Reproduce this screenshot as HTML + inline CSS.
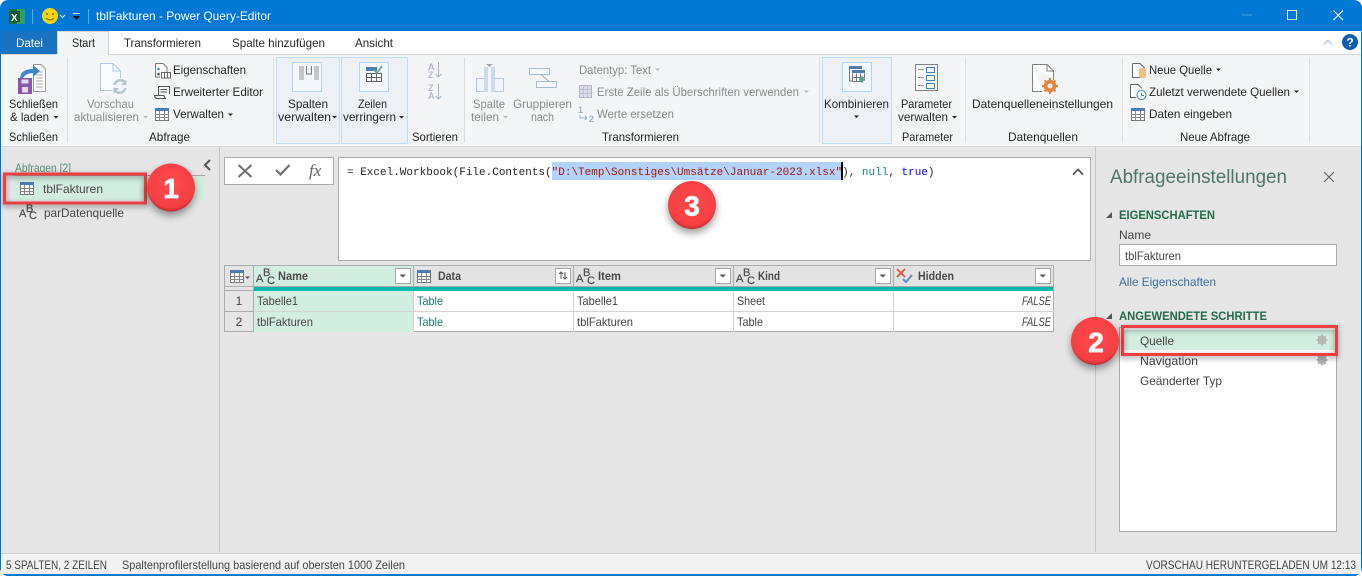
<!DOCTYPE html>
<html lang="de"><head><meta charset="utf-8"><title>tblFakturen - Power Query-Editor</title>
<style>
html,body{margin:0;padding:0;background:#fff;width:1362px;height:576px;overflow:hidden}
svg{display:block}
text{font-family:"Liberation Sans",sans-serif;font-size:12px;fill:#262626}
.d{fill:#8b8b8b}
.t{fill:#fff}
.s{fill:#444}
.m{font-family:"Liberation Mono",monospace;font-size:11px}
.h{font-weight:bold;fill:#4a4a4a;font-size:11.5px}
.g{font-weight:bold;fill:#1f6b4a;font-size:12px}
.n{fill:#fff;stroke:#fff;stroke-width:.7px;font-weight:bold;font-size:28px;text-anchor:middle}
.abc{font-size:11px;fill:#4a4a4a;stroke:#4a4a4a;stroke-width:.2px}
.b{filter:drop-shadow(0 2px 3px rgba(0,0,0,.45))}
.c{filter:drop-shadow(0 4px 4px rgba(0,0,0,.4))}
</style></head><body>
<svg width="1362" height="576" viewBox="0 0 1362 576" xmlns="http://www.w3.org/2000/svg">
<defs>
<radialGradient id="rg" cx="50%" cy="42%" r="58%"><stop offset="0" stop-color="#ff4a4c"/><stop offset=".86" stop-color="#f73f43"/><stop offset="1" stop-color="#c22a30"/></radialGradient>
<g id="tb"><rect x=".5" y=".5" width="13" height="12" fill="#fff" stroke="#777"/><rect x="0" y="0" width="14" height="3" fill="#4f7cb0"/><path d="M0 6.5H14M0 9.5H14M4.500 3V13M9.500 3V13" stroke="#888" stroke-width="1" fill="none"/></g>
<g id="dd"><rect x=".5" y=".5" width="15" height="15" fill="#fff" stroke="#a6a6a6"/><path d="M4.500 6.500H11L7.750 9.500Z" fill="#555"/></g>
<g id="gear"><circle cx="0" cy="0" r="3.200" fill="none" stroke="#b5b5b5" stroke-width="2.400"/><path d="M0-5.500V5.500M-5.500 0H5.500M-3.900-3.900L3.900 3.900M-3.900 3.900L3.900-3.900" stroke="#b5b5b5" stroke-width="1.800"/></g>
</defs>

<!-- window -->
<rect x="0" y="0" width="1362" height="576" rx="8" fill="#0078d4"/>
<rect x="1" y="31" width="1360" height="543" fill="#e6e6e6"/>

<!-- title bar -->
<rect x="9" y="9" width="16" height="15" rx="1" fill="#1d6f42"/><rect x="17" y="9" width="8" height="15" fill="#2e9e62"/><rect x="9" y="11" width="11" height="11" fill="#0f5c33"/><text x="11" y="21" class="t" style="font-size:10px;font-weight:bold">X</text>
<path d="M32.500 9V24M88.500 9V24" stroke="#5aa7e3"/>
<circle cx="50" cy="16" r="8" fill="#f5d312"/><circle cx="47" cy="14" r="1" fill="#8a6d00"/><circle cx="53" cy="14" r="1" fill="#8a6d00"/><path d="M46 18q4 4 8 0" stroke="#8a6d00" fill="none"/>
<path d="M60 15l2.500 2.500L65 15" stroke="#cfe5f7" fill="none"/>
<path d="M73 13.500H80" stroke="#fff"/><path d="M73 16H80L76.500 20Z" fill="#111"/>
<text x="96" y="20" class="t" textLength="175" lengthAdjust="spacingAndGlyphs">tblFakturen - Power Query-Editor</text>
<path d="M1242 15H1252" stroke="#4a9de0"/>
<rect x="1287.500" y="10.500" width="9" height="9" fill="none" stroke="#fff"/>
<path d="M1333.500 10.500L1343 20M1343 10.500L1333.500 20" stroke="#fff" fill="none"/>

<!-- tabs -->
<rect x="1" y="31" width="1360" height="23" fill="#fff"/>
<rect x="1" y="31" width="56" height="23" fill="#1a72c2"/>
<path d="M57.500 54V31.500H108.500V54" fill="#f4f5f7" stroke="#d2d2d2"/>
<text x="16" y="47" class="t" textLength="27" lengthAdjust="spacingAndGlyphs">Datei</text>
<text x="72" y="47" textLength="23" lengthAdjust="spacingAndGlyphs">Start</text>
<text x="124" y="47" textLength="77" lengthAdjust="spacingAndGlyphs">Transformieren</text>
<text x="232" y="47" textLength="93" lengthAdjust="spacingAndGlyphs">Spalte hinzufügen</text>
<text x="355" y="47" textLength="38" lengthAdjust="spacingAndGlyphs">Ansicht</text>
<path d="M1324 44.500l4-4 4 4" stroke="#bdbdbd" fill="none" stroke-width="1.200"/>
<circle cx="1350" cy="42" r="8" fill="#0e5fb4"/><text x="1350" y="46.500" class="t" style="font-size:12px;font-weight:bold;text-anchor:middle">?</text>

<!-- ribbon -->
<rect x="1" y="54" width="1360" height="93" fill="#f4f5f7"/>
<path d="M108 54.500H1361" stroke="#d6d6d6"/><path d="M1 54.500H57" stroke="#d6d6d6"/>
<path d="M1 146.500H1361" stroke="#d9d9d9"/>
<path d="M67.500 57V143M273.500 57V143M464.500 57V143M819.500 57V143M965.500 57V143M1122.500 57V143M1309.500 57V143" stroke="#dcdcdc"/>
<rect x="276.500" y="57.500" width="63" height="86" fill="#edf1f6" stroke="#c3dcf5"/>
<rect x="341.500" y="57.500" width="66" height="86" fill="#edf1f6" stroke="#c3dcf5"/>
<rect x="822.500" y="57.500" width="69" height="86" fill="#edf1f6" stroke="#c3dcf5"/>

<!-- Schließen & laden icon -->
<path d="M33.500 64.500H41L45.500 69V91.500H33.500Z" fill="#fff" stroke="#999"/><path d="M36 72H43M36 75H43M36 78H43M36 81H43M36 84H43M36 87H43" stroke="#aaa"/>
<path d="M20 78q1-9 13-9v-4l7 6-7 6v-4q-7 0-10 5Z" fill="#3f87c9"/>
<rect x="18" y="78" width="14" height="16" fill="#8c56a8"/><rect x="21.500" y="79.500" width="7" height="4" fill="#e6d8ee"/><rect x="22" y="87" width="6" height="5.500" fill="#e6d8ee"/>
<text x="9" y="108" textLength="49" lengthAdjust="spacingAndGlyphs">Schließen</text>
<text x="10" y="121" textLength="39" lengthAdjust="spacingAndGlyphs">&amp; laden</text>
<path d="M53.500 116H58.500L56 118.500Z" fill="#222"/>
<text x="9" y="141" textLength="49" lengthAdjust="spacingAndGlyphs">Schließen</text>

<!-- Abfrage -->
<path d="M100.500 63.500H113L120.500 71V90.500H100.500Z" fill="#f8fafd" stroke="#b5c8e2"/><path d="M113 63.500V71H120.500" fill="none" stroke="#b5c8e2"/>
<circle cx="120" cy="86.500" r="8.500" fill="#f4f5f7"/>
<path d="M114.500 85a6 6 0 0 1 10.500-2.500M125.500 88a6 6 0 0 1-10.500 2.500" fill="none" stroke="#b7c4d0" stroke-width="2.400"/>
<path d="M126.500 79.500V85H121ZM113.500 93.500V88H119Z" fill="#b7c4d0"/>
<text x="87" y="108" class="d" textLength="47" lengthAdjust="spacingAndGlyphs">Vorschau</text>
<text x="74" y="121" class="d" textLength="65" lengthAdjust="spacingAndGlyphs">aktualisieren</text>
<path d="M143 116H148L145.500 118.500Z" fill="#bbb"/>
<path d="M155.500 63.500H163L167 67.500V77" fill="#fff" stroke="#777"/><path d="M155.500 63.500V77H160" fill="none" stroke="#777"/><circle cx="158.500" cy="69" r="1.300" fill="#5b8ec2"/><circle cx="158.500" cy="74" r="1.300" fill="#555"/>
<rect x="161.500" y="72.500" width="9" height="5.500" fill="#fff" stroke="#666"/><path d="M164.500 72.500V78M167.500 72.500V78" stroke="#666"/>
<path d="M158.500 86.500H169.500V94M158.500 86.500V95.500H154.500Q155 98.500 157 98.500H166Q164 98 164 95.500H158.500M160.500 89.500H167M160.500 92H167" fill="none" stroke="#555"/>
<use href="#tb" x="155" y="108"/>
<text x="173" y="74" textLength="73" lengthAdjust="spacingAndGlyphs">Eigenschaften</text>
<text x="173" y="96" textLength="90" lengthAdjust="spacingAndGlyphs">Erweiterter Editor</text>
<text x="173" y="118" textLength="51" lengthAdjust="spacingAndGlyphs">Verwalten</text>
<path d="M228 113.500H233L230.500 116Z" fill="#222"/>
<text x="149" y="141" textLength="41" lengthAdjust="spacingAndGlyphs">Abfrage</text>

<!-- Spalten -->
<rect x="292.500" y="62.500" width="29" height="29" fill="#f3f6fa" stroke="#b5d5f3"/>
<rect x="299" y="66" width="5" height="14" fill="#c4c6cb"/><rect x="314" y="66" width="5" height="14" fill="#c4c6cb"/>
<path d="M306.500 66V74H311.500V66" fill="none" stroke="#777"/>
<text x="288" y="108" textLength="40" lengthAdjust="spacingAndGlyphs">Spalten</text>
<text x="278" y="121" textLength="53" lengthAdjust="spacingAndGlyphs">verwalten</text>
<path d="M332 116H337L334.500 118.500Z" fill="#222"/>

<!-- Zeilen -->
<rect x="359.500" y="62.500" width="29" height="29" fill="#f3f6fa" stroke="#b5d5f3"/>
<rect x="366" y="67" width="11" height="4" fill="#4f7cb0"/>
<rect x="366.500" y="73.500" width="15" height="8" fill="#fff" stroke="#666"/><path d="M371.500 73.500V81.500M376.500 73.500V81.500M366.500 77.500H381.500" stroke="#666"/>
<path d="M374 70l3 3 5-7" stroke="#67ab94" stroke-width="1.700" fill="none"/>
<text x="358" y="108" textLength="29" lengthAdjust="spacingAndGlyphs">Zeilen</text>
<text x="343" y="121" textLength="53" lengthAdjust="spacingAndGlyphs">verringern</text>
<path d="M399 116H404L401.500 118.500Z" fill="#222"/>

<!-- Sortieren -->
<text x="428" y="70" style="font-size:9px;font-weight:bold;fill:#b3bcc9">A</text><text x="428" y="78" style="font-size:9px;font-weight:bold;fill:#b3bcc9">Z</text>
<text x="428" y="91" style="font-size:9px;font-weight:bold;fill:#b3bcc9">Z</text><text x="428" y="99" style="font-size:9px;font-weight:bold;fill:#b3bcc9">A</text>
<path d="M438.500 62V77M435.500 74l3 3 3-3M438.500 84V99M435.500 96l3 3 3-3" stroke="#a5b3c5" fill="none"/>
<text x="412" y="141" textLength="46" lengthAdjust="spacingAndGlyphs">Sortieren</text>

<!-- Transformieren -->
<rect x="476.500" y="78.500" width="9" height="13" fill="#f1f4f9" stroke="#b6c5dc"/><rect x="493.500" y="78.500" width="10" height="13" fill="#f1f4f9" stroke="#b6c5dc"/>
<rect x="484" y="67" width="4" height="25" fill="#cddaeb"/><rect x="491" y="67" width="4" height="25" fill="#cddaeb"/><path d="M486 64H493L489.500 67Z" fill="#a8a8a8"/>
<rect x="529.500" y="68.500" width="20" height="6" fill="#f6f8fb" stroke="#a8bcd8"/><rect x="536.500" y="81.500" width="20" height="6" fill="#f6f8fb" stroke="#a8bcd8"/><path d="M541 74.500L549 81.500" stroke="#a8a8a8"/>
<text x="473" y="108" class="d" textLength="32" lengthAdjust="spacingAndGlyphs">Spalte</text>
<text x="471" y="121" class="d" textLength="28" lengthAdjust="spacingAndGlyphs">teilen</text>
<path d="M503 116H508L505.500 118.500Z" fill="#bbb"/>
<text x="513" y="108" class="d" textLength="59" lengthAdjust="spacingAndGlyphs">Gruppieren</text>
<text x="531" y="121" class="d" textLength="23" lengthAdjust="spacingAndGlyphs">nach</text>
<text x="579" y="74" class="d" textLength="72" lengthAdjust="spacingAndGlyphs">Datentyp: Text</text>
<path d="M655 68.500H660L657.500 71Z" fill="#bbb"/>
<rect x="579.500" y="85.500" width="12" height="12" fill="#dcdde8" stroke="#b5b5c5"/><path d="M583.500 86V97M587.500 86V97M580 89.500H591M580 93.500H591" stroke="#c0c0d0"/>
<text x="597" y="96" class="d" textLength="202" lengthAdjust="spacingAndGlyphs">Erste Zeile als Überschriften verwenden</text>
<path d="M804 90.500H809L806.500 93Z" fill="#bbb"/>
<text x="578" y="113" style="font-size:9px;font-weight:bold;fill:#9db0c8">1</text><text x="589" y="122" style="font-size:9px;font-weight:bold;fill:#9db0c8">2</text>
<path d="M580 115v3h7M585 116l2 2-2 2" stroke="#9db0c8" fill="none"/>
<text x="597" y="118" class="d" textLength="77" lengthAdjust="spacingAndGlyphs">Werte ersetzen</text>
<text x="602" y="141" textLength="77" lengthAdjust="spacingAndGlyphs">Transformieren</text>

<!-- Kombinieren -->
<rect x="842.500" y="62.500" width="29" height="29" fill="#f3f6fa" stroke="#b5d5f3"/>
<rect x="849" y="66" width="13" height="3" fill="#4f7cb0"/><rect x="852" y="70" width="13" height="3" fill="#4f7cb0"/>
<path d="M849.500 69V81H853M852.500 73.500V81.500H861M852.500 77.500H865M856.500 73.500V81.500M860.500 73.500V80M864.500 73.500V78" fill="none" stroke="#777"/>
<path d="M862 76.500V82.500M859 79.500H865" stroke="#5a9c86" stroke-width="2.200"/>
<text x="824" y="108" textLength="65" lengthAdjust="spacingAndGlyphs">Kombinieren</text>
<path d="M854 115.500H859L856.500 118Z" fill="#222"/>

<!-- Parameter -->
<rect x="915.500" y="64.500" width="22" height="26" fill="#f7f8fa" stroke="#808080"/>
<path d="M918 69.500H924M918 77.500H924M918 85.500H924" stroke="#999"/>
<rect x="926.500" y="67.500" width="8" height="5" fill="#fff" stroke="#3f7fbd"/><rect x="926.500" y="75.500" width="8" height="5" fill="#fff" stroke="#3f7fbd"/><rect x="926.500" y="83.500" width="8" height="5" fill="#fff" stroke="#3f7fbd"/>
<text x="901" y="108" textLength="51" lengthAdjust="spacingAndGlyphs">Parameter</text>
<text x="898" y="121" textLength="50" lengthAdjust="spacingAndGlyphs">verwalten</text>
<path d="M952 116H957L954.500 118.500Z" fill="#222"/>
<text x="902" y="141" textLength="51" lengthAdjust="spacingAndGlyphs">Parameter</text>

<!-- Datenquellen -->
<path d="M1032.500 64.500H1047L1053.500 71V80M1032.500 64.500V91.500H1042" fill="#fff" stroke="#808080"/><path d="M1047 64.500V71H1053.500" fill="none" stroke="#808080"/>
<circle cx="1050" cy="86" r="4.500" fill="none" stroke="#e8873a" stroke-width="3.500"/><path d="M1050 78V94M1042 86H1058M1044.500 80.500L1055.500 91.500M1044.500 91.500L1055.500 80.500" stroke="#e8873a" stroke-width="2.200"/><circle cx="1050" cy="86" r="2.500" fill="#f4f5f7"/>
<text x="972" y="108" textLength="141" lengthAdjust="spacingAndGlyphs">Datenquelleneinstellungen</text>
<text x="1008" y="141" textLength="70" lengthAdjust="spacingAndGlyphs">Datenquellen</text>

<!-- Neue Abfrage -->
<path d="M1132.500 63.500H1140L1144.500 68M1132.500 63.500V77.500H1140" fill="#fff" stroke="#666"/>
<rect x="1139" y="68" width="7" height="10" rx="2" fill="#eec284"/>
<text x="1149" y="74" textLength="63" lengthAdjust="spacingAndGlyphs">Neue Quelle</text>
<path d="M1216 68.500H1221L1218.500 71Z" fill="#222"/>
<path d="M1130.500 84.500H1138L1142 88.500M1130.500 84.500V97.500H1136" fill="#fff" stroke="#666"/>
<circle cx="1141.500" cy="95" r="4.500" fill="#fff" stroke="#4a84bd"/><path d="M1141.500 92.500V95.500H1144" stroke="#4a84bd" fill="none"/>
<text x="1149" y="96" textLength="141" lengthAdjust="spacingAndGlyphs">Zuletzt verwendete Quellen</text>
<path d="M1294 90.500H1299L1296.500 93Z" fill="#222"/>
<use href="#tb" x="1131" y="108"/>
<text x="1149" y="118" textLength="83" lengthAdjust="spacingAndGlyphs">Daten eingeben</text>
<text x="1180" y="141" textLength="70" lengthAdjust="spacingAndGlyphs">Neue Abfrage</text>

<!-- pane separators -->
<path d="M219.500 147V552M1095.500 147V552" stroke="#c6c6c6"/>

<!-- left queries pane -->
<text x="15" y="172" style="fill:#5a8d76" textLength="56" lengthAdjust="spacingAndGlyphs">Abfragen [2]</text>
<path d="M14 175.500H205" stroke="#a8a8a8"/>
<rect x="14" y="176" width="191" height="24" fill="#d2eee0"/>
<use href="#tb" x="20" y="182"/>
<text x="43" y="193" class="s" textLength="60" lengthAdjust="spacingAndGlyphs">tblFakturen</text>
<text x="19" y="217" class="abc">A</text><text x="26" y="212" class="abc">B</text><text x="29" y="219" class="abc">C</text>
<text x="44" y="217" class="s" textLength="80" lengthAdjust="spacingAndGlyphs">parDatenquelle</text>
<path d="M210 160l-5 5 5 5" stroke="#555" stroke-width="2" fill="none"/>
<rect x="4.500" y="174" width="141" height="29" fill="none" stroke="#ef3e42" stroke-width="3" class="b"/>

<!-- fx box -->
<rect x="224.500" y="157.500" width="109" height="27" fill="#fff" stroke="#ababab"/>
<path d="M238.500 165l13 12M251.500 165l-13 12" stroke="#707070" stroke-width="2" fill="none"/>
<path d="M276 170l4.500 4.500 9-9.500" stroke="#707070" stroke-width="2.200" fill="none"/>
<text x="309" y="176" style="font-family:'Liberation Serif',serif;font-style:italic;font-size:17px;fill:#666">fx</text>

<!-- formula box -->
<rect x="338.500" y="157.500" width="752" height="103" fill="#fff" stroke="#ababab"/>
<rect x="552" y="162" width="290" height="18" fill="#b2d4fb"/>
<text x="347" y="175" class="m" xml:space="preserve">= Excel.Workbook(File.Contents(<tspan style="fill:#a31515">"D:\Temp\Sonstiges\Umsätze\Januar-2023.xlsx"</tspan>), <tspan style="fill:#098a8a">null</tspan>, <tspan style="fill:#0000ff">true</tspan>)</text>
<rect x="841" y="162" width="2" height="18" fill="#000"/>
<path d="M1073 174.500l5-5 5 5" stroke="#555" stroke-width="1.700" fill="none"/>

<!-- table -->
<rect x="224.500" y="265.500" width="829" height="66" fill="#fff" stroke="#ababab"/>
<rect x="225" y="266" width="828" height="21" fill="#e3e3e3"/>
<rect x="254" y="266" width="159" height="21" fill="#d2eee0"/>
<rect x="254" y="291" width="159" height="41" fill="#d2eee0"/>
<rect x="225" y="287" width="29" height="45" fill="#e6e6e6"/>
<rect x="254" y="287" width="799" height="4" fill="#01b8aa"/>
<path d="M224 286.500H1054M224 290.500H254" stroke="#ababab"/>
<path d="M224 311.500H254M224 331.500H254" stroke="#ababab"/>
<path d="M254 311.500H1054" stroke="#d4d4d4"/>
<path d="M413.500 291V332M573.500 291V332M733.500 291V332M893.500 291V332" stroke="#d4d4d4"/>
<path d="M224.500 265V332M253.500 265V332M413.500 265V287M573.500 265V287M733.500 265V287M893.500 265V287" stroke="#ababab"/>

<use href="#tb" x="230" y="270"/><path d="M245 276.500H250L247.500 279Z" fill="#555"/>

<text x="256" y="282" class="abc">A</text><text x="263" y="276" class="abc">B</text><text x="267" y="284" class="abc">C</text>
<text x="278" y="280" class="h" textLength="30" lengthAdjust="spacingAndGlyphs">Name</text>
<use href="#dd" x="395" y="268"/>

<use href="#tb" x="417" y="270"/>
<text x="438" y="280" class="h" textLength="23" lengthAdjust="spacingAndGlyphs">Data</text>
<rect x="555.500" y="268.500" width="15" height="15" fill="#fff" stroke="#a6a6a6"/>
<path d="M561 279v-7M559 274l2-2 2 2M565 272v7M563 277l2 2 2-2" stroke="#555" fill="none"/>

<text x="576" y="282" class="abc">A</text><text x="583" y="276" class="abc">B</text><text x="587" y="284" class="abc">C</text>
<text x="598" y="280" class="h" textLength="23" lengthAdjust="spacingAndGlyphs">Item</text>
<use href="#dd" x="715" y="268"/>

<text x="736" y="282" class="abc">A</text><text x="743" y="276" class="abc">B</text><text x="747" y="284" class="abc">C</text>
<text x="758" y="280" class="h" textLength="22" lengthAdjust="spacingAndGlyphs">Kind</text>
<use href="#dd" x="875" y="268"/>

<path d="M897 269l8 8M905 269l-8 8" stroke="#d9593a" stroke-width="1.800" fill="none"/>
<path d="M903 279l3 3 6-7" stroke="#5b8ec2" stroke-width="2" fill="none"/>
<text x="918" y="280" class="h" textLength="36" lengthAdjust="spacingAndGlyphs">Hidden</text>
<use href="#dd" x="1035" y="268"/>

<text x="239" y="305" class="s" style="text-anchor:middle">1</text>
<text x="239" y="326" class="s" style="text-anchor:middle">2</text>
<text x="257" y="305" class="s" textLength="41" lengthAdjust="spacingAndGlyphs">Tabelle1</text>
<text x="257" y="326" class="s" textLength="56" lengthAdjust="spacingAndGlyphs">tblFakturen</text>
<text x="417" y="305" style="fill:#1a7a70" textLength="26" lengthAdjust="spacingAndGlyphs">Table</text>
<text x="417" y="326" style="fill:#1a7a70" textLength="26" lengthAdjust="spacingAndGlyphs">Table</text>
<text x="577" y="305" class="s" textLength="41" lengthAdjust="spacingAndGlyphs">Tabelle1</text>
<text x="577" y="326" class="s" textLength="56" lengthAdjust="spacingAndGlyphs">tblFakturen</text>
<text x="737" y="305" class="s" textLength="28" lengthAdjust="spacingAndGlyphs">Sheet</text>
<text x="737" y="326" class="s" textLength="26" lengthAdjust="spacingAndGlyphs">Table</text>
<text x="1022" y="305" class="s" style="font-style:italic" textLength="29" lengthAdjust="spacingAndGlyphs">FALSE</text>
<text x="1022" y="326" class="s" style="font-style:italic" textLength="29" lengthAdjust="spacingAndGlyphs">FALSE</text>

<!-- right settings -->
<text x="1110" y="183" style="font-size:19px;fill:#4f7468" textLength="177" lengthAdjust="spacingAndGlyphs">Abfrageeinstellungen</text>
<path d="M1324 172l10 10M1334 172l-10 10" stroke="#666" stroke-width="1.200" fill="none"/>
<path d="M1112 212V218H1106Z" fill="#555"/>
<text x="1119" y="219" class="g" textLength="96" lengthAdjust="spacingAndGlyphs">EIGENSCHAFTEN</text>
<text x="1119" y="239" class="s" textLength="32" lengthAdjust="spacingAndGlyphs">Name</text>
<rect x="1119.500" y="244.500" width="217" height="21" fill="#fff" stroke="#ababab"/>
<text x="1125" y="260" class="s" textLength="56" lengthAdjust="spacingAndGlyphs">tblFakturen</text>
<text x="1119" y="286" style="fill:#3a6ea5" textLength="97" lengthAdjust="spacingAndGlyphs">Alle Eigenschaften</text>
<path d="M1112 313V319H1106Z" fill="#555"/>
<text x="1119" y="320" class="g" textLength="148" lengthAdjust="spacingAndGlyphs">ANGEWENDETE SCHRITTE</text>
<rect x="1119.500" y="327.500" width="217" height="204" fill="#fff" stroke="#ababab"/>
<rect x="1121" y="330" width="215" height="20" fill="#d2eee0"/>
<text x="1140" y="345" class="s" textLength="34" lengthAdjust="spacingAndGlyphs">Quelle</text>
<text x="1140" y="365" class="s" textLength="58" lengthAdjust="spacingAndGlyphs">Navigation</text>
<text x="1140" y="385" class="s" textLength="82" lengthAdjust="spacingAndGlyphs">Geänderter Typ</text>
<use href="#gear" x="1322" y="340"/>
<use href="#gear" x="1322" y="360"/>
<rect x="1122.500" y="326.500" width="214" height="28" fill="none" stroke="#ef3e42" stroke-width="3" class="b"/>

<!-- status bar -->
<rect x="1" y="553" width="1360" height="21" fill="#f2f2f2"/>
<path d="M1 553.500H1361" stroke="#cfcfcf"/>
<text x="6" y="569" class="s" textLength="101" lengthAdjust="spacingAndGlyphs">5 SPALTEN, 2 ZEILEN</text>
<text x="122" y="569" class="s" textLength="283" lengthAdjust="spacingAndGlyphs">Spaltenprofilerstellung basierend auf obersten 1000 Zeilen</text>
<text x="1146" y="569" class="s" textLength="210" lengthAdjust="spacingAndGlyphs">VORSCHAU HERUNTERGELADEN UM 12:13</text>

<!-- number badges -->
<g class="c"><circle cx="171" cy="187.500" r="24" fill="url(#rg)"/></g><text x="171" y="198" class="n">1</text>
<g class="c"><circle cx="1095" cy="341" r="24" fill="url(#rg)"/></g><text x="1096" y="352" class="n">2</text>
<g class="c"><circle cx="692" cy="205" r="24" fill="url(#rg)"/></g><text x="692" y="215.500" class="n">3</text>
</svg>
</body></html>
